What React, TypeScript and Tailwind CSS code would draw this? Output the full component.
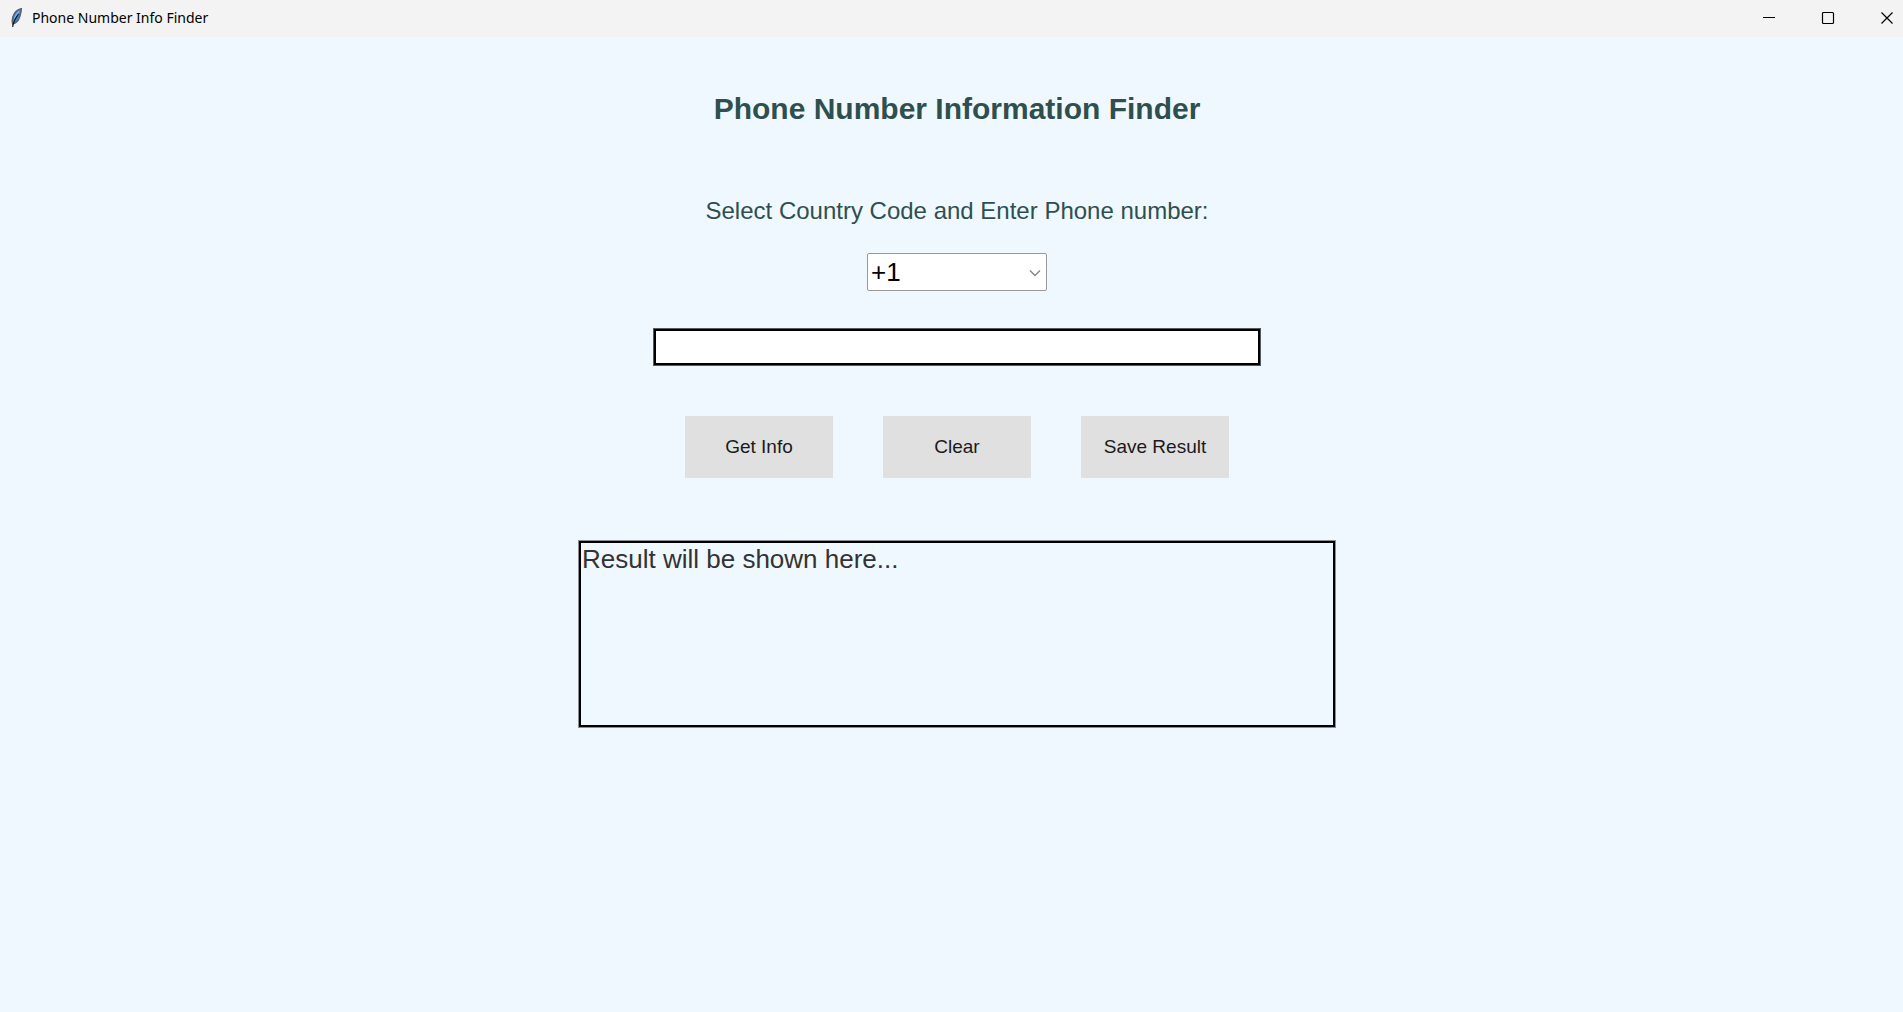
import { useState } from "react";
import type { FormEvent } from "react";

const COUNTRY_CODES = ["+1", "+7", "+33", "+44", "+49", "+61", "+81", "+86", "+91"];
const PLACEHOLDER = "Result will be shown here...";

function FeatherIcon() {
  return (
    <svg viewBox="0 0 16 22" className="h-[22px] w-4" aria-hidden="true">
      <path
        d="M13.4 1.6C9.6 2 6 5.6 4.8 10C4.1 12.6 4 15 4.6 17C8.2 16.4 10.8 13 12 9C12.8 6.4 13.4 4 13.4 1.6Z"
        fill="#3f7fd0"
        stroke="#5a5f68"
        strokeWidth="1.3"
      />
      <path d="M12 3.2C9 5 6.6 8 5.8 12.4L8.6 9.2Z" fill="#8fbdf0" />
      <path d="M10.4 7C8 10.4 5.4 15 4.6 19.8" fill="none" stroke="#111111" strokeWidth="1.2" />
    </svg>
  );
}

function TitleBar() {
  return (
    <header className="flex h-[37px] items-center justify-between bg-[#f3f3f3] pb-0.5 font-['Noto_Sans',sans-serif] text-black">
      <div className="flex items-center gap-2 pl-2">
        <FeatherIcon />
        <span className="text-sm">Phone Number Info Finder</span>
      </div>
      <div className="flex items-center gap-[43px] pr-2">
        <button type="button" aria-label="Minimize" className="size-4">
          <svg viewBox="0 0 16 16" className="size-4" fill="none" stroke="currentColor">
            <path d="M2 7.5H14" />
          </svg>
        </button>
        <button type="button" aria-label="Maximize" className="size-4">
          <svg viewBox="0 0 16 16" className="size-4" fill="none" stroke="currentColor">
            <rect x="2.5" y="2.5" width="11" height="11" rx="1" strokeWidth="1.2" />
          </svg>
        </button>
        <button type="button" aria-label="Close" className="size-4">
          <svg viewBox="0 0 16 16" className="size-4" fill="none" stroke="currentColor">
            <path d="M2.5 2.5L13.5 13.5M13.5 2.5L2.5 13.5" strokeWidth="1.2" />
          </svg>
        </button>
      </div>
    </header>
  );
}

const buttonClass = "h-[62px] w-[148px] bg-[#e0e0e0] text-[19px] text-[#1a1a1a] hover:bg-[#d4d4d4]";

export default function App() {
  const [code, setCode] = useState("+1");
  const [phone, setPhone] = useState("");
  const [result, setResult] = useState(PLACEHOLDER);

  const getInfo = (event: FormEvent) => {
    event.preventDefault();
    setResult(phone ? `${code} ${phone}` : PLACEHOLDER);
  };

  const clear = () => {
    setPhone("");
    setResult(PLACEHOLDER);
  };

  const saveResult = () => {
    const link = document.createElement("a");
    link.href = URL.createObjectURL(new Blob([result], { type: "text/plain" }));
    link.download = "result.txt";
    link.click();
  };

  return (
    <div className="flex min-h-screen flex-col bg-[#f0f8ff] font-['Liberation_Sans',Arial,sans-serif]">
      <TitleBar />
      <main className="flex flex-1 flex-col items-center px-4 pt-14 pl-[27px]">
        <h1 className="text-[30px] leading-8 font-bold text-[#2f4f4f]">Phone Number Information Finder</h1>
        <form onSubmit={getInfo} className="mt-[72px] flex w-full flex-col items-center">
          <label htmlFor="country-code" className="text-2xl leading-7 text-[#2f4f4f]">
            Select Country Code and Enter Phone number:
          </label>
          <div className="relative mt-7 h-[38px] w-[180px]">
            <select
              id="country-code"
              value={code}
              onChange={(event) => setCode(event.target.value)}
              className="size-full appearance-none rounded-xs border border-[#999999] bg-white px-[3px] text-[26px] leading-8 text-black"
            >
              {COUNTRY_CODES.map((item) => (
                <option key={item}>{item}</option>
              ))}
            </select>
            <svg
              viewBox="0 0 12 12"
              className="pointer-events-none absolute top-[14px] right-1.5 size-3"
              fill="none"
              stroke="#858585"
              strokeWidth="1.4"
              aria-hidden="true"
            >
              <path d="M1 3.5L6 8.5L11 3.5" />
            </svg>
          </div>
          <input
            type="tel"
            aria-label="Phone number"
            value={phone}
            onChange={(event) => setPhone(event.target.value)}
            className="mt-[38px] h-9 w-full max-w-[606px] border-2 border-black bg-white px-1 text-[26px] text-black ring-1 ring-[#555a5e] outline-none"
          />
          <div className="mt-[51px] flex flex-wrap justify-center gap-[50px]">
            <button type="submit" className={buttonClass}>Get Info</button>
            <button type="button" onClick={clear} className={buttonClass}>Clear</button>
            <button type="button" onClick={saveResult} className={buttonClass}>Save Result</button>
          </div>
        </form>
        <output
          htmlFor="country-code"
          className="mt-[63px] block h-[186px] w-full max-w-[756px] border-2 border-black px-px text-[26px] leading-8 text-[#333333] ring-1 ring-[#8a8f93]"
        >
          {result}
        </output>
      </main>
    </div>
  );
}
